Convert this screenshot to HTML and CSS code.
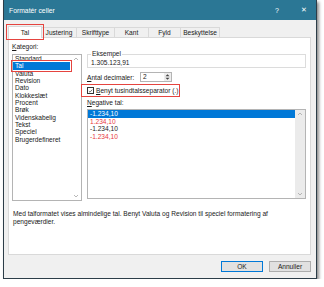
FILE: index.html
```html
<!DOCTYPE html>
<html lang="da">
<head>
  <meta charset="UTF-8" />
  <title>Formatér celler</title>
  <link rel="stylesheet" href="styles.css">
</head>
<body>

  <div class="dialog">
    <div class="titlebar">
      <span class="title">Formatér celler</span>
      <span class="title-btn">?</span>
      <span class="title-btn close">✕</span>
    </div>

    <ul class="tabs">
      <li class="tab active">Tal</li>
      <li class="tab">Justering</li>
      <li class="tab">Skrifttype</li>
      <li class="tab">Kant</li>
      <li class="tab">Fyld</li>
      <li class="tab">Beskyttelse</li>
    </ul>

    <div class="panel">
      <div class="columns">
        <div class="category">
          <div class="label"><u>K</u>ategori:</div>
          <div class="listbox">
            <ul class="items">
              <li>Standard</li>
              <li class="selected marked">Tal</li>
              <li>Valuta</li>
              <li>Revision</li>
              <li>Dato</li>
              <li>Klokkeslæt</li>
              <li>Procent</li>
              <li>Brøk</li>
              <li>Videnskabelig</li>
              <li>Tekst</li>
              <li>Speciel</li>
              <li>Brugerdefineret</li>
            </ul>
            <div class="scroll">
              <svg width="6" height="4" viewBox="0 0 6 4"><path d="M1 3 L3 1 L5 3" fill="none" stroke="#a6a6a6" stroke-width="0.8"/></svg>
              <svg width="6" height="4" viewBox="0 0 6 4"><path d="M1 1 L3 3 L5 1" fill="none" stroke="#a6a6a6" stroke-width="0.8"/></svg>
            </div>
          </div>
        </div>

        <div class="options">
          <fieldset class="sample">
            <legend>Eksempel</legend>
            <div class="sample-value">1.305.123,91</div>
          </fieldset>

          <div class="decimals">
            <label class="decimals-label"><u>A</u>ntal decimaler:</label>
            <div class="spin">
              <span class="spin-value">2</span>
              <span class="spin-btns">
                <svg width="7" height="8" viewBox="0 0 7 8">
                  <path d="M1.5 3.2 L3.5 1.2 L5.5 3.2 Z" fill="#444"/>
                  <path d="M1.5 4.8 L3.5 6.8 L5.5 4.8 Z" fill="#444"/>
                </svg>
              </span>
            </div>
          </div>

          <div class="separator">
            <span class="checkbox">
              <svg width="6" height="6" viewBox="0 0 7 7"><path d="M1.2 3.6 L2.8 5.2 L5.9 1.6" fill="none" stroke="#222" stroke-width="0.9"/></svg>
            </span>
            <span><u>B</u>enyt tusindtalsseparator (.)</span>
          </div>

          <div class="label neg-label"><u>N</u>egative tal:</div>
          <div class="listbox negatives">
            <ul class="items">
              <li class="selected">-1.234,10</li>
              <li class="red">1.234,10</li>
              <li>-1.234,10</li>
              <li class="red">-1.234,10</li>
            </ul>
            <div class="scroll grey">
              <svg width="6" height="4" viewBox="0 0 6 4"><path d="M1 3 L3 1 L5 3" fill="none" stroke="#a6a6a6" stroke-width="0.8"/></svg>
              <svg width="6" height="4" viewBox="0 0 6 4"><path d="M1 1 L3 3 L5 1" fill="none" stroke="#a6a6a6" stroke-width="0.8"/></svg>
            </div>
          </div>
        </div>
      </div>

      <p class="description">Med talformatet vises almindelige tal. Benyt Valuta og Revision til speciel formatering af pengeværdier.</p>
    </div>

    <div class="footer">
      <button class="btn default">OK</button>
      <button class="btn">Annuller</button>
    </div>
  </div>

</body>
</html>
```

FILE: styles.css
```css
body {
  margin: 0;
  padding: 0;
  background-color: #ffffff;
  font-family: 'Liberation Sans', Arial, sans-serif;
  font-size: 6.6px;
  color: #1a1a1a;
}

.dialog {
  margin-left: 3px;
  width: 312px;
  height: 278px;
  border: 1px solid #2c3d48;
  border-top: none;
  background-color: #f0f0f0;
  box-shadow: 2px 2px 3px rgba(0, 0, 0, 0.45);
  display: flex;
  flex-direction: column;
}

.titlebar {
  height: 20px;
  background-color: #2b7795;
  color: #ffffff;
  display: flex;
  align-items: center;
  padding-left: 5px;
  padding-right: 9px;
  font-size: 6.8px;
}

.title {
  flex: 1;
}

.title-btn {
  font-size: 7px;
}

.title-btn.close {
  margin-left: 22px;
}

.tabs {
  list-style: none;
  margin: 0;
  padding: 0 0 0 4px;
  height: 17px;
  display: flex;
  align-items: flex-end;
}

.tab {
  height: 9px;
  line-height: 9px;
  text-align: center;
  border: 1px solid #d9d9d9;
  border-bottom: none;
  margin-left: -1px;
  background-color: #f0f0f0;
}

.tab:nth-child(1) { width: 32px; }
.tab:nth-child(2) { width: 34px; }
.tab:nth-child(3) { width: 37px; }
.tab:nth-child(4) { width: 33px; }
.tab:nth-child(5) { width: 31px; }
.tab:nth-child(6) { width: 38px; }

.tab.active {
  height: 11px;
  line-height: 12px;
  background-color: #ffffff;
  margin-bottom: -1px;
  position: relative;
  z-index: 1;
  margin-left: 0;
  outline: 1.5px solid #e5443f;
  outline-offset: 1px;
}

.panel {
  margin: 0 5px 0 4px;
  height: 218px;
  background-color: #ffffff;
  border: 1px solid #d9d9d9;
  padding: 5px 3px 0 3px;
  box-sizing: border-box;
}

.columns {
  display: grid;
  grid-template-columns: 70px 219px;
  column-gap: 5px;
}

.label {
  line-height: 8px;
  height: 8px;
  margin-bottom: 3px;
}

.listbox {
  display: flex;
  border: 1px solid #b4b4b4;
  box-sizing: border-box;
  background-color: #ffffff;
}

.category .listbox {
  height: 147px;
}

.items {
  list-style: none;
  margin: 0;
  padding: 0;
  flex: 1;
}

.items li {
  height: 7.35px;
  line-height: 7.35px;
  padding-left: 2px;
  white-space: nowrap;
}

.items li.selected {
  background-color: #0078d7;
  color: #ffffff;
}

.items li.marked {
  outline: 1.5px solid #e5443f;
  outline-offset: 1px;
  margin-right: 1px;
}

.items li.red {
  color: #e8383d;
}

.scroll {
  width: 10px;
  display: flex;
  flex-direction: column;
  justify-content: space-between;
  align-items: center;
  padding: 2px 0;
  box-sizing: border-box;
}

.scroll.grey {
  background-color: #ebebeb;
}

.sample {
  margin: 7px 0 0 0;
  padding: 3px 3px 1px 3px;
  border: 1px solid #dcdcdc;
  min-width: 0;
  height: 18px;
  box-sizing: border-box;
}

.sample legend {
  padding: 0 1px;
  line-height: 8px;
}

.sample-value {
  line-height: 8px;
  margin-top: -2px;
}

.decimals {
  display: flex;
  align-items: center;
  margin-top: 4px;
  height: 10px;
}

.decimals-label {
  width: 53px;
}

.spin {
  width: 32px;
  height: 10px;
  border: 1px solid #b4b4b4;
  box-sizing: border-box;
  display: flex;
  align-items: center;
  background-color: #ffffff;
}

.spin-value {
  flex: 1;
  padding-left: 2px;
  line-height: 8px;
}

.spin-btns {
  width: 7px;
  height: 8px;
  display: flex;
  background-color: #eeeeee;
}

.separator {
  display: flex;
  align-items: center;
  gap: 2px;
  width: 97px;
  height: 11px;
  box-sizing: border-box;
  margin: 3px 0 0 -5px;
  padding-left: 5px;
  white-space: nowrap;
  outline: 1.5px solid #e5443f;
  outline-offset: 0.5px;
}

.checkbox {
  width: 7px;
  height: 7px;
  flex-shrink: 0;
  border: 1px solid #333;
  box-sizing: border-box;
  display: flex;
  align-items: center;
  justify-content: center;
  background-color: #ffffff;
}

.neg-label {
  margin-top: 3px;
  margin-bottom: 2px;
}

.negatives {
  height: 90px;
}

.negatives .items li {
  height: 7.6px;
  line-height: 7.6px;
}

.description {
  margin: 9px 0 0 1px;
  line-height: 8px;
  width: 262px;
}

.footer {
  display: flex;
  justify-content: flex-end;
  gap: 6px;
  padding: 6px 5px 0 0;
}

.btn {
  width: 42px;
  height: 11px;
  padding: 0;
  font-family: 'Liberation Sans', Arial, sans-serif;
  font-size: 6.6px;
  color: #1a1a1a;
  background-color: #e1e1e1;
  border: 1px solid #adadad;
}

.btn.default {
  border-color: #0078d7;
}
```
